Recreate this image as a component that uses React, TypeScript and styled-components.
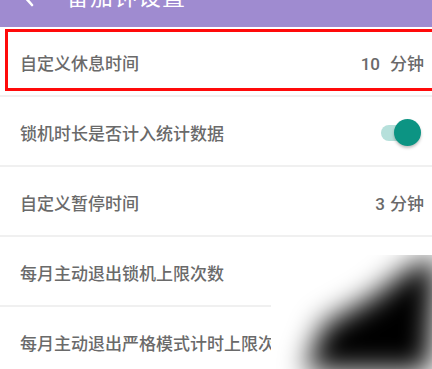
import React from 'react';
import styled, { createGlobalStyle } from 'styled-components';

const GlobalStyle = createGlobalStyle`
    html, body {
        margin: 0;
        padding: 0;
        background: #ffffff;
        overflow: hidden;
    }
    body {
        font-family: Roboto, "Noto Sans CJK SC", sans-serif;
    }
`;

interface IRow {
    label: string;
    value?: string;
    num?: string;
    numGap?: number;
    toggle?: boolean;
    highlight?: boolean;
}

const rows: IRow[] = [
    { label: '自定义休息时间', num: '10', numGap: 10, value: '分钟', highlight: true },
    { label: '锁机时长是否计入统计数据', toggle: true },
    { label: '自定义暂停时间', num: '3', numGap: 5, value: '分钟' },
    { label: '每月主动退出锁机上限次数' },
    { label: '每月主动退出严格模式计时上限次数' },
];

const App = (): JSX.Element => {
    return (
        <SPage>
            <GlobalStyle />
            <SHeader>
                <SBack viewBox="0 0 16 24" width="16" height="24">
                    <path d="M12 3 L4 12 L12 21" fill="none" stroke="#ffffff" strokeWidth="2.6" strokeLinecap="round" strokeLinejoin="round" />
                </SBack>
                <STitle>番茄钟设置</STitle>
            </SHeader>
            <SList>
                {rows.map((row) => (
                    <SRow key={row.label} highlight={row.highlight}>
                        <SLabel>{row.label}</SLabel>
                        {row.num && (
                            <SValue>
                                <SNum gap={row.numGap || 5}>{row.num}</SNum>
                                {row.value}
                            </SValue>
                        )}
                        {row.toggle && (
                            <SSwitch>
                                <STrack />
                                <SThumb />
                            </SSwitch>
                        )}
                    </SRow>
                ))}
            </SList>
            <SSmudge>
                <svg width="161" height="114" viewBox="0 0 161 114">
                    <defs>
                        <filter id="smudge" x="-50%" y="-50%" width="200%" height="200%">
                            <feGaussianBlur stdDeviation="14" />
                        </filter>
                    </defs>
                    <polygon
                        points="34,116 52,70 102,42 140,12 166,2 158,116"
                        fill="#000000"
                        filter="url(#smudge)"
                    />
                </svg>
            </SSmudge>
        </SPage>
    );
};

const GREY_TEXT = '#6a6a6a';

const SPage = styled.div`
    position: relative;
    width: 432px;
    height: 369px;
    overflow: hidden;
    background: #ffffff;
`;

const SHeader = styled.div`
    display: flex;
    align-items: flex-end;
    box-sizing: border-box;
    height: 27px;
    padding: 0 0 20px 20px;
    gap: 30px;
    background: #9f8bd0;
    overflow: hidden;
`;

const SBack = styled.svg`
    flex: none;
    margin-bottom: -1px;
`;

const STitle = styled.span`
    color: #ffffff;
    font-family: "Noto Sans CJK SC", sans-serif;
    font-size: 23px;
    line-height: 24px;
    letter-spacing: 1px;
`;

const SList = styled.div`
    display: flex;
    flex-direction: column;
`;

const SRow = styled.div<{ highlight?: boolean }>`
    position: relative;
    display: flex;
    align-items: center;
    justify-content: space-between;
    height: 70px;
    padding: 3px 8px 0 20px;
    box-sizing: border-box;
    border-bottom: 2px solid #f0f0f0;

    &::after {
        content: '';
        display: ${(p) => (p.highlight ? 'block' : 'none')};
        position: absolute;
        left: 5px;
        top: 2px;
        right: -10px;
        bottom: 4px;
        border: 3px solid #ff0a0a;
    }
`;

const SLabel = styled.span`
    color: ${GREY_TEXT};
    font-family: "Noto Sans CJK SC", sans-serif;
    font-weight: 500;
    font-size: 17px;
    white-space: nowrap;
`;

const SValue = styled.span`
    color: ${GREY_TEXT};
    font-family: "Noto Sans CJK SC", sans-serif;
    font-weight: 500;
    font-size: 17px;
    white-space: nowrap;
`;

const SNum = styled.span<{ gap: number }>`
    font-family: Roboto, sans-serif;
    font-weight: 500;
    margin-right: ${(p) => p.gap}px;
`;

const SSwitch = styled.div`
    position: relative;
    width: 42px;
    height: 28px;
    margin-right: 3px;
`;

const STrack = styled.div`
    position: absolute;
    left: 2px;
    top: 6px;
    width: 34px;
    height: 16px;
    border-radius: 8px;
    background: #b6e0db;
`;

const SThumb = styled.div`
    position: absolute;
    right: 0;
    top: 0;
    width: 27px;
    height: 27px;
    border-radius: 50%;
    background: #0c9483;
    box-shadow: 0 2px 3px rgba(0, 0, 0, 0.25);
`;

const SSmudge = styled.div`
    position: absolute;
    left: 271px;
    top: 255px;
    width: 161px;
    height: 114px;
    background: #ffffff;
    overflow: hidden;

    svg {
        display: block;
    }
`;

export default App;
